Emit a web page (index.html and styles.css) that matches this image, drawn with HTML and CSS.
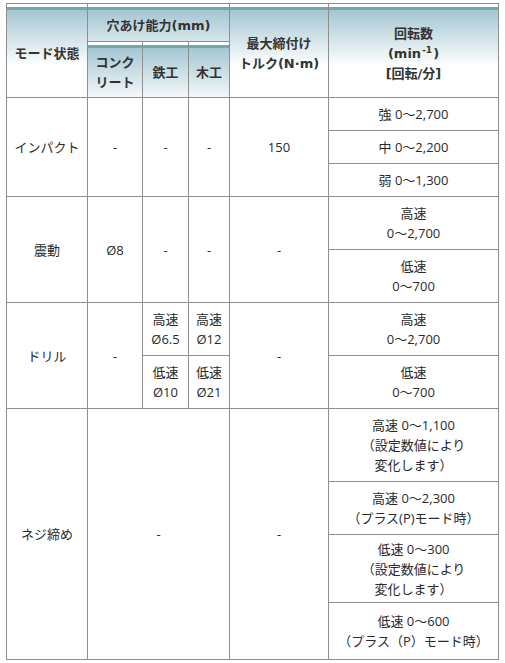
FILE: index.html
```html
<!DOCTYPE html>
<html lang="ja">
<head>
<meta charset="utf-8">
<link rel="stylesheet" href="styles.css">
</head>
<body>
<div class="wrap">
<table class="spec">
  <colgroup>
    <col class="c-mode">
    <col class="c-con">
    <col class="c-iron">
    <col class="c-wood">
    <col class="c-torque">
    <col class="c-rpm">
  </colgroup>
  <thead>
    <tr class="h1">
      <th rowspan="2">モード状態</th>
      <th colspan="3">穴あけ能力(mm)</th>
      <th rowspan="2">最大締付け<br>トルク(N·m)</th>
      <th rowspan="2">回転数<br>(min<sup>-1</sup>)<br>[回転/分]</th>
    </tr>
    <tr class="h2">
      <th>コンク<br>リート</th>
      <th>鉄工</th>
      <th>木工</th>
    </tr>
  </thead>
  <tbody>
    <tr class="r33">
      <td rowspan="3">インパクト</td>
      <td rowspan="3">-</td>
      <td rowspan="3">-</td>
      <td rowspan="3">-</td>
      <td rowspan="3">150</td>
      <td>強 0～2,700</td>
    </tr>
    <tr class="r33"><td>中 0～2,200</td></tr>
    <tr class="r33"><td>弱 0～1,300</td></tr>

    <tr class="r53">
      <td rowspan="2">震動</td>
      <td rowspan="2">Ø8</td>
      <td rowspan="2">-</td>
      <td rowspan="2">-</td>
      <td rowspan="2">-</td>
      <td>高速<br>0～2,700</td>
    </tr>
    <tr class="r53"><td>低速<br>0～700</td></tr>

    <tr class="r53">
      <td rowspan="2">ドリル</td>
      <td rowspan="2">-</td>
      <td>高速<br>Ø6.5</td>
      <td>高速<br>Ø12</td>
      <td rowspan="2">-</td>
      <td>高速<br>0～2,700</td>
    </tr>
    <tr class="r53">
      <td>低速<br>Ø10</td>
      <td>低速<br>Ø21</td>
      <td>低速<br>0～700</td>
    </tr>

    <tr class="r73">
      <td rowspan="4">ネジ締め</td>
      <td rowspan="4" colspan="3">-</td>
      <td rowspan="4">-</td>
      <td>高速 0～1,100<br>（設定数値により<br>変化します）</td>
    </tr>
    <tr class="r53"><td>高速 0～2,300<br>（プラス(P)モード時）</td></tr>
    <tr class="r68"><td>低速 0～300<br>（設定数値により<br>変化します）</td></tr>
    <tr class="r57"><td>低速 0～600<br>（プラス（P）モード時）</td></tr>
  </tbody>
</table>
</div>
</body>
</html>
```
FILE: styles.css
```css
html, body {
  margin: 0;
  padding: 0;
  background: #fff;
}
.wrap {
  padding: 3px 0 0 6px;
}
.spec {
  border-collapse: collapse;
  table-layout: fixed;
  width: 492px;
  font-family: "Open Sans", "Noto Sans CJK JP", sans-serif;
  font-size: 13px;
  line-height: 20px;
  color: #2a2a2a;
}
.c-mode { width: 81px; }
.c-con { width: 55px; }
.c-iron { width: 46px; }
.c-wood { width: 41px; }
.c-torque { width: 99px; }
.c-rpm { width: 170px; }

.spec th, .spec td {
  border: 1px solid #8e8e8e;
  padding: 0 2px;
  text-align: center;
  vertical-align: middle;
}
.spec th {
  font-family: "DejaVu Sans", "Noto Sans CJK JP", sans-serif;
  font-weight: bold;
  color: #333;
  background-color: #fff;
  background-image: linear-gradient(to bottom,
    #fff 0, #fff 3px,
    #74a6ab 3px, #74a6ab 6px,
    #a4c6d2 6px, #fff 62px);
  background-repeat: no-repeat;
  padding-top: 6px;
}
.spec sup {
  font-size: 9px;
  line-height: 0;
  vertical-align: 5px;
  padding: 0 1px;
}
.h1 { height: 38px; }
.h2 { height: 56px; }
.r33 { height: 33px; }
.r53 { height: 53px; }
.r57 { height: 57px; }
.r68 { height: 68px; }
.r73 { height: 73px; }
```
